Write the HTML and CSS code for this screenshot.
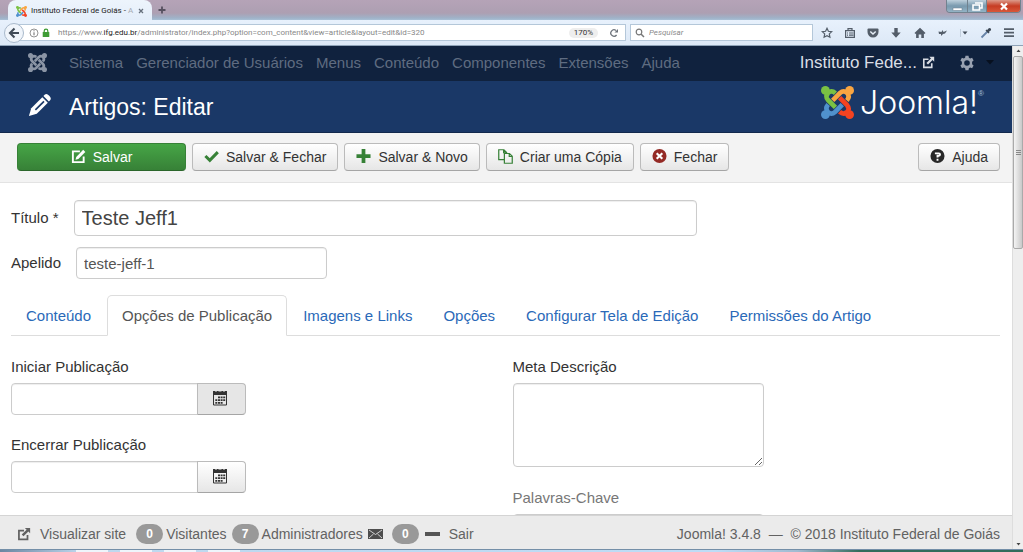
FILE: index.html
```html
<!DOCTYPE html>
<html lang="pt-BR">
<head>
<meta charset="utf-8">
<title>Instituto Federal de Goiás - Artigos: Editar</title>
<link rel="stylesheet" href="styles.css">
</head>
<body>
<svg class="defs" aria-hidden="true">
  <symbol id="knot" viewBox="0 0 24 24">
    <g fill="none" stroke-width="3.400">
      <path class="k-blue" d="M15.500 13.500L10.200 18.900Q7.600 21.200 5 18.900Q2.700 16.300 5.200 13.500"/>
      <path class="k-red" transform="rotate(-90 12 12)" d="M15.500 13.500L10.200 18.900Q7.600 21.200 5 18.900Q2.700 16.300 5.200 13.500"/>
      <path class="k-orange" transform="rotate(180 12 12)" d="M15.500 13.500L10.200 18.900Q7.600 21.200 5 18.900Q2.700 16.300 5.200 13.500"/>
      <path class="k-green" transform="rotate(90 12 12)" d="M15.500 13.500L10.200 18.900Q7.600 21.200 5 18.900Q2.700 16.300 5.200 13.500"/>
    </g>
    <circle class="f-green" cx="3.200" cy="3.200" r="3.200"/>
    <circle class="f-orange" cx="20.800" cy="3.200" r="3.200"/>
    <circle class="f-blue" cx="3.200" cy="20.800" r="3.200"/>
    <circle class="f-red" cx="20.800" cy="20.800" r="3.200"/>
  </symbol>
  <symbol id="external" viewBox="0 0 16 16">
    <path d="M8 4H2.200V14H12V9" fill="none" stroke="currentColor" stroke-width="2"/>
    <path d="M9 1h6v6l-2-2-5.600 5.600-2-2L11 3z" fill="currentColor"/>
  </symbol>
  <symbol id="calendar" viewBox="0 0 16 16">
    <path d="M1 1h2v.6h2V1h1.500v.6h3V1H11v.6h2V1h2v4H1z" fill="currentColor"/>
    <path d="M1.500 4v11h13V4" fill="none" stroke="currentColor"/>
    <path d="M6 6.500h2v1.800H6zM8.600 6.500h2v1.800h-2zM11.200 6.500h2v1.800h-2zM3.300 9.200h2V11h-2zM6 9.200h2V11H6zM8.600 9.200h2V11h-2zM11.200 9.200h2V11h-2zM3.300 12h2v1.800h-2zM6 12h2v1.800H6zM8.600 12h2v1.800h-2z" fill="currentColor"/>
  </symbol>
</svg>

<header class="browser">
  <div class="tabstrip">
    <div class="browser-tab">
      <svg class="favicon knot-color"><use href="#knot"/></svg>
      <span class="tab-title">Instituto Federal de Goiás - <span class="tab-fade">A</span></span>
      <button class="plain" aria-label="Fechar aba"><svg width="6" height="6" viewBox="0 0 6 6"><path d="M1 1l4 4M5 1L1 5" stroke="#66707c" stroke-width="1.300"/></svg></button>
    </div>
    <button class="plain new-tab" aria-label="Nova aba"><svg width="8" height="8" viewBox="0 0 8 8"><path d="M4 .5v7M.5 4h7" stroke="#56505f" stroke-width="1.800"/></svg></button>
    <div class="window-buttons">
      <button aria-label="Minimizar"><svg width="20" height="13" viewBox="0 0 20 13"><rect x="6" y="8" width="9" height="2.500" fill="#fff" stroke="#64798a" stroke-width=".5"/></svg></button>
      <button aria-label="Restaurar"><svg width="18" height="13" viewBox="0 0 18 13"><path d="M7 3h7v5h-2M5 5h6.500v5H5z" fill="none" stroke="#fff" stroke-width="1.600"/></svg></button>
      <button class="close" aria-label="Fechar janela"><svg width="33" height="13" viewBox="0 0 33 13"><path d="M14 3.500l6 6M20 3.500l-6 6" stroke="#fff" stroke-width="2.200"/></svg></button>
    </div>
  </div>
  <div class="navrow">
    <button class="plain back" aria-label="Voltar"><svg width="12" height="12" viewBox="0 0 12 12"><path d="M6.500 1.500L2 6l4.500 4.500M2 6h9" fill="none" stroke="#414b57" stroke-width="2.100"/></svg></button>
    <div class="urlbar">
      <svg width="10" height="10" viewBox="0 0 10 10"><circle cx="5" cy="5" r="4" fill="none" stroke="#777" stroke-width=".8"/><path d="M5 4.300v3M5 2.300v1" stroke="#666"/></svg>
      <svg width="8" height="10" viewBox="0 0 8 10"><rect x=".7" y="4" width="6.600" height="5" rx=".6" fill="#3f9c35"/><path d="M2.200 4.500V3a1.800 1.800 0 013.600 0v1.500" fill="none" stroke="#3f9c35" stroke-width="1.200"/></svg>
      <span class="url">https://www.<b>ifg.edu.br</b>/administrator/index.php?option=com_content&amp;view=article&amp;layout=edit&amp;id=320</span>
      <span class="zoom">170%</span>
      <button class="plain reload" aria-label="Recarregar"><svg width="10" height="10" viewBox="0 0 10 10"><path d="M7.600 7A3.200 3.200 0 117 2.500" fill="none" stroke="#6d737b" stroke-width="1.300"/><path d="M5.500 4.500H9V1z" fill="#6d737b"/></svg></button>
    </div>
    <div class="searchbar">
      <svg width="10" height="10" viewBox="0 0 10 10"><circle cx="4" cy="4" r="2.800" fill="none" stroke="#777" stroke-width="1.200"/><path d="M6 6l3 3" stroke="#777" stroke-width="1.500"/></svg>
      <input type="text" placeholder="Pesquisar" aria-label="Pesquisar">
    </div>
    <div class="tools">
      <button class="plain" aria-label="Favoritar"><svg width="12" height="12" viewBox="0 0 12 12"><path d="M6 1.300l1.400 3 3.300.4-2.400 2.200.6 3.300L6 8.600l-2.900 1.600.6-3.300L1.300 4.700l3.300-.4z" fill="none" stroke="#535d69" stroke-width="1.200"/></svg></button>
      <button class="plain" aria-label="Biblioteca"><svg width="12" height="12" viewBox="0 0 12 12"><path d="M1.600 3.600h8.800v6.800H1.600zM4 3.500V1.600h4v1.900M3 6h1M5 6h4.500M3 8.200h1M5 8.200h4.500" fill="none" stroke="#535d69" stroke-width="1.200"/></svg></button>
      <button class="plain" aria-label="Pocket"><svg width="12" height="12" viewBox="0 0 12 12"><path d="M1.500 1.500h9q1 0 1 1V5a5.500 5.500 0 01-11 0V2.500q0-1 1-1z" fill="#535d69"/><path d="M3.300 4.500L6 7l2.700-2.500" fill="none" stroke="#e6eef7" stroke-width="1.500"/></svg></button>
      <button class="plain" aria-label="Downloads"><svg width="12" height="12" viewBox="0 0 12 12"><path d="M4.300 1h3.400v4.500h3L6 10.800 1.300 5.500h3z" fill="#535d69"/></svg></button>
      <button class="plain" aria-label="Início"><svg width="12" height="12" viewBox="0 0 12 12"><path d="M6 .8L11.500 6l-1 .9-.6-.5V11H7.300V7.500H4.700V11H2.100V6.400l-.6.500-1-.9z" fill="#535d69"/></svg></button>
      <button class="plain" aria-label="Extensão"><svg width="12" height="12" viewBox="0 0 12 12"><path d="M1.500 4.500l3 .5 1-2 1 2 3.500-1.500-2 3-2 .5-2 2L4 7 2 7z" fill="#535d69"/></svg></button>
      <button class="plain more" aria-label="Mais"><svg width="8" height="8" viewBox="0 0 8 8"><path d="M1.500 2.500h5L4 5.500z" fill="#414b57"/></svg></button>
      <button class="plain" aria-label="Conta-gotas"><svg width="12" height="12" viewBox="0 0 12 12"><path d="M1.500 10.500l6-6" stroke="#6683a8" stroke-width="1.800"/><path d="M5.500 3.500l3 3 1-1-.5-.7L11 3.200Q11.500 1 9 1L7.200 3l-.7-.5z" fill="#3e4956"/></svg></button>
      <button class="plain" aria-label="Menu"><svg width="12" height="12" viewBox="0 0 12 12"><path d="M1 2.200h10M1 5.700h10M1 9.200h10" stroke="#535d69" stroke-width="1.700"/></svg></button>
    </div>
  </div>
</header>

<div class="viewport">
  <div class="page">
    <nav class="menubar">
      <a class="menu-logo" href="#" aria-label="Painel"><svg width="19" height="19"><use href="#knot"/></svg></a>
      <ul>
        <li><a href="#">Sistema</a></li>
        <li><a href="#">Gerenciador de Usuários</a></li>
        <li><a href="#">Menus</a></li>
        <li><a href="#">Conteúdo</a></li>
        <li><a href="#">Componentes</a></li>
        <li><a href="#">Extensões</a></li>
        <li><a href="#">Ajuda</a></li>
      </ul>
      <a class="site-name" href="#">Instituto Fede... <svg width="13" height="13"><use href="#external"/></svg></a>
      <button class="plain settings" aria-label="Configurações">
        <svg width="16" height="16" viewBox="0 0 16 16"><path fill-rule="evenodd" fill="#98a1b0" d="M6.500.8h3l.4 2 1.300.7 1.900-.7 1.500 2.600L13.100 6.800v2.400l1.500 1.400-1.500 2.600-1.900-.7-1.300.7-.4 2h-3l-.4-2-1.300-.7-1.900.7-1.500-2.600 1.500-1.400V6.800L1.400 5.400l1.500-2.600 1.900.7 1.300-.7zM8 5.200a2.800 2.800 0 100 5.600 2.800 2.800 0 000-5.600z"/></svg>
        <svg width="8" height="5" viewBox="0 0 8 5"><path d="M0 0h8L4 4.500z" fill="#07101f"/></svg>
      </button>
    </nav>

    <div class="titlebar">
      <svg class="pencil" width="24" height="24" viewBox="0 0 26 26"><path fill="#fff" d="M1 25l2.500-8.500L15.500 4.500l6 6L9.500 22.500z"/><path fill="#fff" d="M16.700 3.300l1.600-1.600q2-1.500 4.700 1.300 2.600 2.600 1.200 4.700l-1.600 1.600z"/><path d="M8 18.300L17.300 9" stroke="#1a3867" stroke-width="1.800"/></svg>
      <h1>Artigos: Editar</h1>
      <div class="brand"><svg class="knot-color" width="33" height="33"><use href="#knot"/></svg><span class="wordmark">Joomla!</span><sup>®</sup></div>
    </div>

    <div class="toolbar">
      <button class="btn save"><svg width="15" height="15" viewBox="0 0 16 16"><path d="M9.500 2.500H2v11.500h11.500V8" fill="none" stroke="#fff" stroke-width="2"/><path d="M13 .8l2.300 2.300-7.500 7.500-3 .8.800-3z" fill="#fff"/></svg>Salvar</button>
      <button class="btn"><svg width="15" height="15" viewBox="0 0 16 16"><path d="M1.500 7.500l4.700 4.600L14.700 3.300" fill="none" stroke="#378137" stroke-width="3.200"/></svg>Salvar &amp; Fechar</button>
      <button class="btn"><svg width="15" height="15" viewBox="0 0 16 16"><path d="M8 0v15M.5 7.500h15" stroke="#378137" stroke-width="4"/></svg>Salvar &amp; Novo</button>
      <button class="btn"><svg width="15" height="15" viewBox="0 0 16 16"><g fill="none" stroke="#378137" stroke-width="1.300"><path d="M6.500 11.300H.8V.8h5.500l2.900 3v1M6 1v3h3"/><path d="M6.800 4.800h5.400l3 3v7.400H6.800zM12 5v3h3"/></g></svg>Criar uma Cópia</button>
      <button class="btn"><svg width="15" height="15" viewBox="0 0 16 16"><circle cx="8" cy="7.500" r="7.500" fill="#942a25"/><path d="M5 4.500l6 6M11 4.500l-6 6" stroke="#fff" stroke-width="2.300"/></svg>Fechar</button>
      <button class="btn help"><svg width="15" height="15" viewBox="0 0 16 16"><circle cx="8" cy="7.500" r="7.500" fill="#282828"/><path d="M5.200 4.700h4.300q1.200 0 1.200 1.200T9.500 7.200H8v1.800M8 10.300v2.200" fill="none" stroke="#fff" stroke-width="2"/></svg>Ajuda</button>
    </div>

    <main class="content">
      <div class="row"><label for="title">Título *</label><input class="field title-field" id="title" type="text" value="Teste Jeff1"></div>
      <div class="row alias"><label for="alias">Apelido</label><input class="field alias-field" id="alias" type="text" value="teste-jeff-1"></div>

      <div class="tabs">
        <a href="#">Conteúdo</a>
        <a class="active" href="#">Opções de Publicação</a>
        <a href="#">Imagens e Links</a>
        <a href="#">Opções</a>
        <a href="#">Configurar Tela de Edição</a>
        <a href="#">Permissões do Artigo</a>
      </div>

      <div class="columns">
        <div class="column">
          <label for="start">Iniciar Publicação</label>
          <div class="date"><input class="field" id="start" type="text"><button class="btn hovered" aria-label="Calendário"><svg width="16" height="16"><use href="#calendar"/></svg></button></div>
          <label for="end">Encerrar Publicação</label>
          <div class="date"><input class="field" id="end" type="text"><button class="btn" aria-label="Calendário"><svg width="16" height="16"><use href="#calendar"/></svg></button></div>
        </div>
        <div class="column">
          <label for="meta">Meta Descrição</label>
          <textarea class="field" id="meta"></textarea>
          <label class="faded" for="keys">Palavras-Chave</label>
          <input class="field keys" id="keys" type="text">
        </div>
      </div>
    </main>

    <footer class="status">
      <a class="visit" href="#"><svg width="14" height="14"><use href="#external"/></svg>Visualizar site</a>
      <span class="badge">0</span><span>Visitantes</span>
      <span class="badge">7</span><span>Administradores</span>
      <svg width="15" height="10" viewBox="0 0 15 10"><rect width="15" height="10" fill="#4d4d4d"/><path d="M1 1l6.500 4.500L14 1M1 9l4.500-4M14 9L9.500 5" fill="none" stroke="#ddd" stroke-width=".9"/></svg>
      <span class="badge mail">0</span>
      <a class="logout" href="#"><svg width="15" height="4" viewBox="0 0 15 4"><rect width="15" height="4" fill="#555"/></svg>Sair</a>
      <span class="copyright">Joomla! 3.4.8 &nbsp;—&nbsp; © 2018 Instituto Federal de Goiás</span>
    </footer>
  </div>
  <div class="scrollbar" aria-hidden="true">
    <svg width="11" height="10" viewBox="0 0 11 10"><path d="M3.500 6h4L5.500 3.500z" fill="#444"/></svg>
    <div class="thumb"><svg width="5" height="6" viewBox="0 0 5 6"><path d="M0 .5h5M0 2.500h5M0 4.500h5" stroke="#888"/></svg></div>
    <svg width="11" height="10" viewBox="0 0 11 10"><path d="M3.500 4h4L5.500 6.500z" fill="#444"/></svg>
  </div>
</div>
<div class="taskbar" aria-hidden="true"><i></i><i></i><i></i><i></i></div>
</body>
</html>
```

FILE: styles.css
```css
* { box-sizing: border-box; }

body {
  margin: 0;
  height: 100vh;
  overflow: hidden;
  display: flex;
  flex-direction: column;
  font-family: "Liberation Sans", Arial, sans-serif;
  font-size: 15px;
  line-height: 20px;
  color: #333;
  background: #fff;
}

button, input, textarea { font: inherit; color: inherit; }
svg { display: block; flex: none; }
a { color: inherit; text-decoration: none; }
.defs { position: absolute; width: 0; height: 0; }
.plain { border: 0; padding: 0; background: none; display: flex; align-items: center; }

#knot { stroke: currentColor; fill: currentColor; }
#knot circle { stroke: none; }
.knot-color { --green: #7ac143; --orange: #f9a541; --blue: #5091cd; --red: #f44321; }
.k-green { stroke: var(--green, currentColor); }
.k-orange { stroke: var(--orange, currentColor); }
.k-blue { stroke: var(--blue, currentColor); }
.k-red { stroke: var(--red, currentColor); }
.f-green { fill: var(--green, currentColor); }
.f-orange { fill: var(--orange, currentColor); }
.f-blue { fill: var(--blue, currentColor); }
.f-red { fill: var(--red, currentColor); }

/* Browser window */
.browser { flex: none; font-family: Roboto, "Noto Sans", sans-serif; font-size: 8px; line-height: 12px; }
.tabstrip { display: flex; height: 20px; padding-left: 8px; background: linear-gradient(#b5a3b7, #ad9fb2 65%, #9fb2c8 90%, #a9c0d6); }
.browser-tab {
  display: flex; align-items: center; gap: 4px;
  width: 144px; padding: 2px 8px 0;
  background: linear-gradient(#edf4fc, #e4eefa);
  border-radius: 8px 8px 0 0;
  color: #222;
}
.favicon { width: 11px; height: 11px; }
.tab-title { flex: 1; white-space: nowrap; }
.tab-fade { color: #a5abb3; }
.new-tab { margin-left: 6px; }
.window-buttons { display: flex; height: 13px; margin-left: auto; margin-right: 2px; border: 1px solid #71828f; border-top: 0; border-radius: 0 0 4px 4px; overflow: hidden; }
.window-buttons button { border: 0; border-right: 1px solid #71828f; padding: 0; background: linear-gradient(#bed0dc, #7899ae 50%, #93b3c5); }
.window-buttons .close { border-right: 0; background: linear-gradient(#dc9b8b, #c63c23 50%, #d8573a); }

.navrow { display: flex; align-items: center; height: 26px; padding: 0 8px 0 4px; background: linear-gradient(#e8f1fc, #dce8f6); border-bottom: 1px solid #8fa3b8; }
.back { justify-content: center; flex: none; width: 20px; height: 20px; border: 1px solid #a9b9cb; border-radius: 50%; background: #f0f5fb; z-index: 1; }
.urlbar, .searchbar { display: flex; align-items: center; height: 17px; background: #fff; border: 1px solid #b4c7d9; }
.urlbar { flex: 1 1 610px; gap: 3px; margin-left: -8px; padding-left: 12px; }
.url { flex: 1; margin-left: 5px; color: #888; white-space: nowrap; overflow: hidden; }
.url b { font-weight: 400; color: #222; }
.zoom { padding: 0 5px; border-radius: 6px; background: #eee; line-height: 10px; color: #333; }
.reload { margin: 0 6px 0 8px; }
.searchbar { flex: 0 1 183px; gap: 4px; margin-left: 4px; padding-left: 4px; }
.searchbar input { flex: 1; min-width: 0; border: 0; padding: 0; background: none; font-style: italic; outline: 0; }
.searchbar input::placeholder { color: #8a8a8a; opacity: 1; }
.tools { display: flex; align-items: center; justify-content: space-between; flex: 0 0 194px; margin-left: 8px; }
.more { border-left: 1px solid #c3d0de; }

/* Page */
.viewport { display: flex; flex: 1; min-height: 0; }
.page { display: flex; flex-direction: column; flex: 1; min-width: 0; }

.menubar { display: flex; align-items: center; flex: none; height: 35px; padding: 0 18px 2px 28px; background: #10223e; color: #5f6c81; white-space: nowrap; }
.menu-logo { color: #8b95a5; }
.menubar ul { display: flex; gap: 13px; margin: 0; padding: 0 0 0 22px; list-style: none; }
.site-name { display: flex; align-items: center; gap: 5px; margin-left: auto; font-size: 17px; color: #d9dde4; }
.settings { gap: 11px; margin-left: 24px; }

.titlebar { display: flex; align-items: center; flex: none; height: 52px; padding: 0 28px; background: #1a3867; border-bottom: 1px solid #12294d; color: #fff; }
.pencil { margin-bottom: 4px; }
.titlebar h1 { margin: 0 0 0 17px; font-size: 23px; line-height: 28px; font-weight: 400; }
.brand { display: flex; align-items: center; margin-left: auto; padding-bottom: 8px; }
.wordmark { margin-left: 6px; font-family: Inter, sans-serif; font-weight: 300; font-size: 32px; line-height: 34px; }
.brand sup { align-self: flex-start; font-size: 8px; line-height: 16px; color: #a9c0dc; }

.toolbar { display: flex; align-items: center; gap: 6px; flex: none; height: 50px; padding: 0 12px 2px 17px; background: #f3f3f3; border-bottom: 1px solid #e3e3e3; }
.btn {
  display: flex; align-items: center; justify-content: center; gap: 7px;
  height: 28px; padding: 0 11px;
  border: 1px solid #bbb; border-bottom-color: #a5a5a5; border-radius: 4px;
  background: linear-gradient(#fff, #e6e6e6);
  font-size: 14px; white-space: nowrap;
}
.save { width: 169px; border-color: #378137 #378137 #2b662b; background: linear-gradient(#46a546, #378137); color: #fff; }
.help { margin-left: auto; }

.content { flex: 1; min-height: 0; overflow: hidden; padding: 17px 12px 0 11px; }
.row { display: flex; align-items: center; gap: 15px; }
.alias { margin-top: 11px; }
.field { border: 1px solid #ccc; border-radius: 4px; padding: 0 7px; height: 32px; background: #fff; color: #555; outline: 0; box-shadow: inset 0 1px 1px #eee; }
.title-field { width: 63%; height: 36px; font-size: 20px; color: #444; }
.alias-field { width: 251px; }

.tabs { display: flex; gap: 1px; margin-top: 16px; border-bottom: 1px solid #ddd; color: #2a69b8; white-space: nowrap; }
.tabs a { padding: 10px 14px 8px; border: 1px solid transparent; border-radius: 5px 5px 0 0; }
.tabs .active { margin-bottom: -1px; padding-bottom: 9px; border-color: #ddd #ddd #fff; background: #fff; color: #555; }

.columns { display: grid; grid-template-columns: 1fr 1fr; gap: 14px; padding-top: 21px; }
.column label { display: block; margin-bottom: 6px; }
.date { display: flex; margin-bottom: 20px; }
.date .field { width: 187px; border-radius: 4px 0 0 4px; }
.date .btn { width: 49px; height: 32px; margin-left: -1px; padding: 0 4px 2px 0; border-radius: 0 4px 4px 0; }
.date .hovered { background: #e6e6e6; }
textarea.field { display: block; width: 251px; height: 84px; margin-bottom: 21px; }
.faded { color: #777; }
.keys { width: 251px; }

.status { display: flex; align-items: center; flex: none; height: 34px; padding: 3px 12px 0 17px; background: #ebebeb; border-top: 1px solid #d4d4d4; color: #626262; font-size: 14px; white-space: nowrap; }
.visit, .logout { display: flex; align-items: center; gap: 9px; }
.badge { min-width: 27px; margin: 0 3px 0 5px; border-radius: 10px; background: #999; color: #fff; font-size: 12px; font-weight: 700; text-align: center; }
.visit + .badge { margin-left: 10px; }
.status > svg { margin-left: 5px; }
.status .mail { margin: 0 6px 0 9px; }
.copyright { margin-left: auto; }

.scrollbar { display: flex; flex-direction: column; flex: none; width: 11px; background: #eee; border-left: 1px solid #ddd; }
.thumb { display: flex; align-items: center; justify-content: center; flex: none; height: 193px; border: 1px solid #aaa; border-radius: 2px; background: linear-gradient(90deg, #f4f4f4, #c9c9c9); }
.thumb + svg { margin-top: auto; }

.taskbar { display: flex; gap: 12px; flex: none; height: 3px; padding-left: 76px; border-top: 1px solid #748fa8; background: linear-gradient(90deg, #6a86a1, #bed8ee 8%, #bddcf6 70%, #a0bad0 78%, #336c5c 84%, #336c5c); }
.taskbar i { width: 32px; background: #eef5fb; }
```
